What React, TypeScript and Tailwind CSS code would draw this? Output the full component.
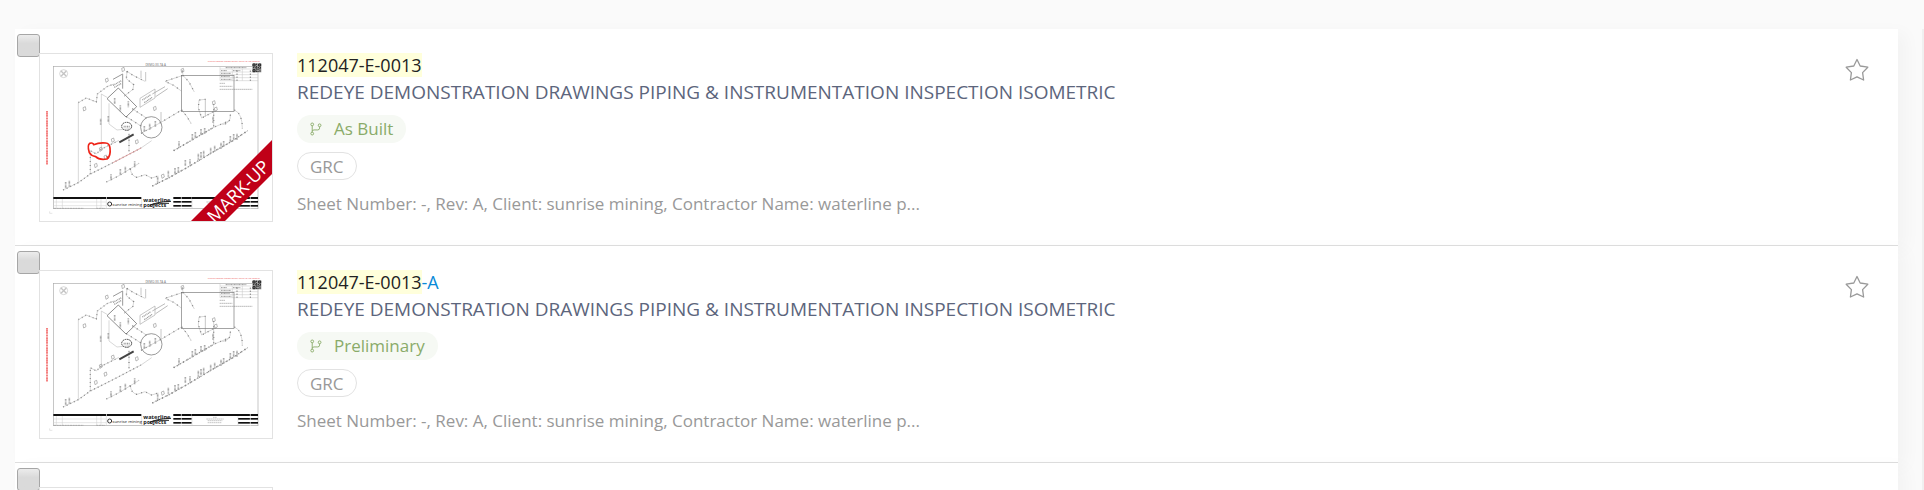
type Drawing = {
  id: string;
  number: string;
  match: string;
  title: string;
  status: string;
  tag: string;
  meta: string;
  markup: boolean;
};

const query = "112047-E-0013";
const title = "REDEYE DEMONSTRATION DRAWINGS PIPING & INSTRUMENTATION INSPECTION ISOMETRIC";
const meta = "Sheet Number: -, Rev: A, Client: sunrise mining, Contractor Name: waterline p...";

const drawings: Drawing[] = [
  { id: "d1", number: "112047-E-0013", match: query, title, status: "As Built", tag: "GRC", meta, markup: true },
  { id: "d2", number: "112047-E-0013-A", match: query, title, status: "Preliminary", tag: "GRC", meta, markup: false },
  { id: "d3", number: "112047-E-0014", match: "", title, status: "Preliminary", tag: "GRC", meta, markup: false },
];

// Small instrument labels standing on the pipe runs
const labels = [
  [198, 486], [209, 482], [334, 463], [362, 447], [377, 440], [405, 424],
  [474, 470], [506, 452], [526, 444], [536, 441], [557, 420], [571, 418],
  [596, 401], [604, 396], [612, 392], [633, 383], [645, 377], [664, 368],
  [672, 363], [692, 348], [702, 342], [712, 341], [578, 342], [587, 336],
  [604, 327], [615, 324], [538, 364], [640, 290], [303, 296], [326, 288],
  [345, 234], [362, 256], [386, 244], [434, 318], [450, 311], [467, 303],
];

const bubbles = [
  [321, 181], [254, 267], [370, 149], [465, 266], [548, 152], [339, 361],
  [411, 366], [288, 437], [317, 412], [489, 469], [642, 249], [648, 268], [303, 388],
];

const pipes = [
  "M190 510 L236 488 L272 462 L340 428 L424 384 L456 362",
  "M236 488 V248 L260 234 L290 246 L293 222 L322 200 L342 192",
  "M305 390 V222 L322 232",
  "M328 250 V312 L352 330 L392 326",
  "M272 462 V392 L290 402 L304 388 L356 362",
  "M388 394 V340",
  "M382 154 L400 166 L436 184",
  "M382 154 L380 176 L402 194 L400 208 L374 228",
  "M398 266 L440 294 M380 290 L424 318",
  "M424 340 L486 306 L546 270",
  "M548 152 L550 166 L496 184 L522 196 L545 213",
  "M550 166 L568 186 L584 216",
  "M546 270 L562 290 L574 310",
  "M618 238 L598 240 L596 264 L606 294 L648 272",
  "M642 252 V322",
  "M704 270 Q728 280 728 326",
  "M692 284 Q694 310 668 314",
  "M522 392 L560 370 L642 322 L690 302",
  "M458 498 L510 472 L560 444 L640 396 L700 362 L744 332",
  "M320 486 L360 466 L418 430",
  "M392 446 Q394 468 412 472 L436 464 L456 474 L476 468",
];

function DrawingSheet({ markup }: { markup: boolean }) {
  return (
    <svg viewBox="121 102 696 501" className="block h-full w-full" role="img" aria-label="Piping isometric drawing">
      <rect x="161" y="139" width="614" height="427" fill="none" stroke="#aaa" strokeWidth="2" />
      <g fill="none" stroke="#c4c4c4" strokeWidth="2">
        <circle cx="192" cy="161" r="12" />
        <path d="M184 153 L200 169 M200 153 L184 169" strokeWidth="4" />
      </g>
      <text x="468" y="138" textAnchor="middle" fontSize="9" fill="#666">DEMO-XX-TA A</text>
      <text x="624" y="125" fontSize="7" fill="#ee5555">Printed copies uncontrolled. Refer to the master</text>
      <path d="M142 273 V434" stroke="#f26a6a" strokeWidth="5" strokeDasharray="5 1 3 1" />

      {/* Legend and QR code */}
      <path d="M661 139 V182 H775 M661 147 H756 M661 156 H775 M661 164 H775 M661 173 H775 M698 147 V182 M728 147 V182" stroke="#c4c4c4" strokeWidth="1.5" fill="none" />
      <path d="M678 143 H740 M664 152 H682 M700 152 H722 M664 160 H694 M664 169 H690 M664 178 H696" stroke="#999" strokeWidth="3" strokeDasharray="4 1 2 1" />
      <path d="M712 152 V182 M752 152 V182" stroke="#555" strokeWidth="3" strokeDasharray="3 6" />
      <path d="M660 190 H676 M660 199 H698 M660 208 H758" stroke="#999" strokeWidth="2" strokeDasharray="5 1" />
      <rect x="758" y="130" width="27" height="27" fill="#999" />
      <g stroke="#222" strokeWidth="3" fill="none">
        <path d="M760 132 h6 v6 h-6z M777 132 h6 v6 h-6z M760 149 h6 v6 h-6z" />
        <path d="M770 131 V157 M760 143 H784 M775 146 V156" strokeDasharray="4 3" />
        <path d="M781 144 V156" strokeDasharray="3 2" />
      </g>

      {/* Pipe runs */}
      <g fill="none">
        {pipes.map((d) => (
          <path key={d} d={d} stroke="#b0b0b0" strokeWidth="1.5" />
        ))}
        {pipes.slice(5).map((d) => (
          <path key={d} d={d} stroke="#888" strokeWidth="4" strokeDasharray="3 13" />
        ))}
        <path d="M190 510 L236 488 L272 462 L340 428 L424 384" stroke="#888" strokeWidth="4" strokeDasharray="3 9" />
        <path d="M236 248 L260 234 L290 246 L293 222 L322 200 L342 192 M272 462 V392 L290 402 L304 388 L356 362" stroke="#999" strokeWidth="4" strokeDasharray="3 9" />
        <path d="M458 498 L510 472 L560 444 L640 396 L700 362 L744 332 M522 392 L560 370 L642 322" stroke="#888" strokeWidth="4" strokeDasharray="3 8" />
        {labels.map(([x, y]) => (
          <path key={`${x}-${y}`} d={`M${x} ${y} v18`} stroke="#aaa" strokeWidth="5" strokeDasharray="3 1" />
        ))}
        {bubbles.map(([x, y]) => (
          <path key={`${x}-${y}`} d={`M${x - 4} ${y - 4} l7 -3 l2 9 l-7 4z`} stroke="#999" strokeWidth="2" />
        ))}
        <path d="M356 204 L411 260 L379 291 L322 236Z" stroke="#555" strokeWidth="2" />
        <path d="M340 178 L369 162 V206" stroke="#999" strokeWidth="3" />
        <path d="M340 196 L366 182 M344 202 L366 190" stroke="#999" strokeWidth="4" strokeDasharray="3 2" />
        <path d="M421 235 L466 207 V234 L421 262Z" stroke="#aaa" strokeWidth="2" />
        <path d="M428 240 L454 224 M434 248 L458 232" stroke="#999" strokeWidth="4" strokeDasharray="3 2" />
        <path d="M458 222 L496 200 M468 230 L504 206" stroke="#999" strokeWidth="2" />
        <path d="M424 152 V174 M438 156 V184 M484 276 V306 M617 238 V290" stroke="#aaa" strokeWidth="2" />
        <rect x="545" y="166" width="158" height="108" stroke="#777" strokeWidth="2" />
        <circle cx="455" cy="322" r="32" stroke="#666" strokeWidth="2" />
        <ellipse cx="381" cy="319" rx="15" ry="12" stroke="#444" strokeWidth="3" strokeDasharray="5 2" />
        <path d="M372 320 H392" stroke="#999" strokeWidth="5" strokeDasharray="3 2" />
        <path d="M359 367 L402 343" stroke="#444" strokeWidth="6" />
      </g>

      {/* Title block */}
      <g fill="#111">
        <rect x="161" y="531" width="158" height="6" />
        <rect x="321" y="531" width="104" height="6" />
        <rect x="577" y="531" width="138" height="6" />
        <rect x="521" y="531" width="55" height="6" />
        <rect x="521" y="543" width="55" height="5" />
        <rect x="521" y="555" width="55" height="5" />
        <rect x="715" y="531" width="60" height="6" />
        <rect x="715" y="543" width="60" height="5" />
        <rect x="715" y="555" width="60" height="5" />
      </g>
      <path d="M161 546 H319 M161 557 H319 M170 537 V566 M188 537 V566 M291 537 V566 M304 537 V566 M320 537 V566 M426 537 V566 M577 537 V566 M715 537 V566" stroke="#ccc" strokeWidth="1.5" />
      <path d="M163 565 H252 M290 565 H316" stroke="#999" strokeWidth="2" strokeDasharray="6 2" />
      <path d="M640 541 H652 M620 546 H672 M624 551 H668 M624 557 H666" stroke="#aaa" strokeWidth="2" strokeDasharray="5 1" />
      <path d="M545 531 V566 M752 531 V566" stroke="#fff" strokeWidth="2" />
      <circle cx="330" cy="552" r="6" fill="none" stroke="#333" strokeWidth="3" />
      <text x="338" y="557" fontSize="13" fill="#222">sunrise mining</text>
      <g fontSize="17" fontWeight="700" fill="#222">
        <text x="431" y="547">waterline</text>
        <text x="431" y="562">projects</text>
      </g>
      <path d="M446 560 Q465 545 514 544 M452 554 Q478 548 508 550" fill="none" stroke="#222" strokeWidth="3" />
      <path d="M150 574 v6 h8" fill="none" stroke="#ccc" strokeWidth="1.5" />

      {markup && (
        <g fill="none" stroke="#ee2418" strokeLinecap="round" strokeLinejoin="round">
          <path d="M340 428 L424 384" stroke="#e99" strokeWidth="2" />
          <path
            d="M282 374 Q280 367 270 370 Q262 376 269 398 Q275 408 288 410 Q298 421 322 417 Q334 408 331 384 Q330 370 318 369 Q298 367 282 374"
            strokeWidth="5"
          />
          <path d="M322 410 l3 4" strokeWidth="4" />
        </g>
      )}
    </svg>
  );
}

function BranchIcon() {
  return (
    <svg viewBox="0 0 13 14" className="h-3.5 w-3" fill="none" stroke="currentColor" aria-hidden="true">
      <circle cx="2.4" cy="2" r="1.5" />
      <circle cx="2.4" cy="12" r="1.5" />
      <circle cx="10.4" cy="3" r="1.5" />
      <path d="M2.4 3.5 V10.5 M10.4 4.5 V6 Q10.4 8 8.4 8 H4.4 Q2.6 8 2.4 9.5" />
    </svg>
  );
}

function StarIcon() {
  return (
    <svg viewBox="0 0 24 24" className="h-6 w-6" fill="none" stroke="currentColor" strokeLinejoin="round" aria-hidden="true">
      <path d="M12 1.5 L15.2 8 L22.8 9.2 L17.6 14.6 L18.6 22 L12 18.8 L5.4 22 L6.4 14.6 L1.2 9.2 L8.8 8 Z" strokeWidth="1.3" />
    </svg>
  );
}

function DrawingRow({ drawing }: { drawing: Drawing }) {
  return (
    <li className="relative flex h-[217px] border-b border-[#dedede] bg-white py-6 pr-[29px] pl-6 shadow-[8px_4px_16px_rgba(0,0,0,0.03)]">
      <input
        type="checkbox"
        aria-label={`Select ${drawing.number}`}
        className="absolute top-[5px] left-0.5 h-[23px] w-[23px] appearance-none rounded-[3px] border border-[#a6a6a6] bg-linear-to-b from-[#ececec] to-[#dadada] to-40%"
      />
      <div className="relative h-[169px] w-[234px] shrink-0 overflow-hidden border border-[#e2e2e2] bg-white">
        <DrawingSheet markup={drawing.markup} />
        {drawing.markup && (
          <div className="absolute -right-[46px] bottom-[18px] w-40 -rotate-45 bg-[#c00018] text-center text-lg leading-6 text-white">
            MARK-UP
          </div>
        )}
      </div>

      <div className="flex min-w-0 flex-1 flex-col items-start pl-6">
        <a href={`#${drawing.id}`} className="text-lg leading-6 text-[#0a8ad8]">
          {drawing.match && <mark className="bg-[#ffffdb] text-[#222]">{drawing.match}</mark>}
          {drawing.number.slice(drawing.match.length)}
        </a>
        <h2 className="mt-px max-w-full truncate text-[19px] leading-7 text-[#5c657c]">{drawing.title}</h2>
        <span className="mt-[9px] flex h-7 items-center gap-3 rounded-full bg-[#f6f9f4] px-[13px] text-[17px] text-[#8aab69]">
          <BranchIcon />
          {drawing.status}
        </span>
        <span className="mt-[9px] flex h-7 items-center rounded-full border border-[#e2e2e2] px-3 pt-0.5 text-[17px] text-[#999]">
          {drawing.tag}
        </span>
        <p className="mt-3 max-w-full truncate text-[17px] leading-6 text-[#999]">{drawing.meta}</p>
      </div>

      <button type="button" aria-label="Add to favourites" className="mt-[5px] h-6 w-6 text-[#999]">
        <StarIcon />
      </button>
    </li>
  );
}

export default function App() {
  return (
    <div className="flex h-screen overflow-hidden bg-[#fafafa] pt-[29px] font-['Open_Sans',sans-serif]">
      <main className="min-w-0 flex-1 pr-6 pl-[15px]">
        <ul>
          {drawings.map((drawing) => (
            <DrawingRow key={drawing.id} drawing={drawing} />
          ))}
        </ul>
      </main>
      <aside className="w-0.5 bg-[#f0f0f0]" />
    </div>
  );
}
